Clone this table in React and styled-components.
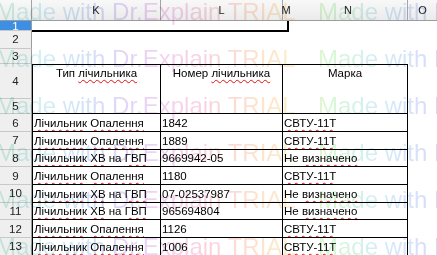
import React from 'react';
import styled, { createGlobalStyle } from 'styled-components';

const Global = createGlobalStyle`
  html, body { margin: 0; padding: 0; background: #fff; overflow: hidden; }
  body { font-family: "Liberation Sans", Arial, sans-serif; }
`;

const COLS = '32px 129px 122px 6px 119px 1fr';

const Sheet = styled.div`
  position: relative;
  width: 437px;
  height: 255px;
  overflow: hidden;
  background: #fff;
`;

const HeadRow = styled.div`
  display: grid;
  grid-template-columns: ${COLS};
  height: 21px;
  box-sizing: border-box;
  background: linear-gradient(#f8f8f8, #ebebeb);
  border-bottom: 1px solid #9c9c9c;
`;

const ColHead = styled.div`
  display: flex;
  align-items: center;
  justify-content: center;
  font-size: 11px;
  color: #1e1e1e;
  border-right: ${(p) => (p.$noLine ? 'none' : '1px solid #a4a4a4')};
  box-sizing: border-box;
  white-space: nowrap;
`;

const Body = styled.div`
  display: grid;
  grid-template-columns: ${COLS};
  grid-template-rows: 10px 17.5px 15.8px 34.4px 15.6px repeat(8, 17.67px);
`;

const RowHead = styled.div`
  grid-column: 1;
  grid-row: ${(p) => p.$row};
  display: flex;
  align-items: center;
  justify-content: center;
  box-sizing: border-box;
  font-size: 11.5px;
  color: ${(p) => (p.$active ? '#fff' : '#222')};
  background: ${(p) => (p.$active ? '#3d8fe3' : '#efefef')};
  border-right: 1px solid #9c9c9c;
  border-bottom: 1px solid #c8c8c8;
  overflow: hidden;
`;

const Selection = styled.div`
  grid-column: 2 / 5;
  grid-row: 1;
  box-sizing: border-box;
  border-right: 2px solid #000;
  border-bottom: 2px solid #000;
  margin-bottom: -1px;
`;

const Cell = styled.div`
  grid-column: ${(p) => p.$col};
  grid-row: ${(p) => p.$row};
  box-sizing: border-box;
  display: flex;
  align-items: ${(p) => (p.$head ? 'flex-start' : 'center')};
  justify-content: ${(p) => (p.$head ? 'center' : 'flex-start')};
  padding: ${(p) => (p.$head ? '2px 0 0 0' : '1px 0 0 1px')};
  font-size: 11.5px;
  color: #000;
  white-space: nowrap;
  overflow: hidden;
  border-right: 1px solid #000;
  border-bottom: 1px solid #000;
  border-left: ${(p) => (p.$first ? '1px solid #000' : 'none')};
  border-top: ${(p) => (p.$head ? '1px solid #000' : 'none')};
`;

const Text = styled.span`
  white-space: pre;
`;

const Wavy = styled.span`
  text-decoration: underline wavy #e01010;
  text-decoration-thickness: 1px;
  text-underline-offset: 2px;
`;

const Watermark = styled.div`
  position: absolute;
  left: -4px;
  top: -12px;
  width: 441px;
  pointer-events: none;
  mix-blend-mode: multiply;
`;

const MarkLine = styled.div`
  display: flex;
  height: 47px;
  line-height: 47px;
  font-size: 24px;
  white-space: nowrap;
  color: transparent;
  background: linear-gradient(
    to right,
    #d0f2e2 0px,
    #d2f0f4 44px,
    #d4e0f8 94px,
    #e4d4f6 134px,
    #f4d2f0 174px,
    #f9d4de 214px,
    #fde0d0 254px,
    #fcecca 294px,
    #d6f8d4 334px,
    #d4ecf8 384px,
    #d8daf8 441px
  );
  -webkit-background-clip: text;
  background-clip: text;
`;

const MarkText = styled.span`
  flex: 0 0 322px;
`;

const rows = [
  ['Лічильник Опалення', '1842', 'СВТУ-11Т'],
  ['Лічильник Опалення', '1889', 'СВТУ-11Т'],
  ['Лічильник ХВ на ГВП', '9669942-05', 'Не визначено'],
  ['Лічильник Опалення', '1180', 'СВТУ-11Т'],
  ['Лічильник ХВ на ГВП', '07-02537987', 'Не визначено'],
  ['Лічильник ХВ на ГВП', '965694804', 'Не визначено'],
  ['Лічильник Опалення', '1126', 'СВТУ-11Т'],
  ['Лічильник Опалення', '1006', 'СВТУ-11Т'],
];

function typeText(t) {
  if (t === 'Лічильник Опалення') {
    return (
      <Text>
        <Wavy>Лічильник</Wavy>{' '}<Wavy>Опалення</Wavy>
      </Text>
    );
  }
  return (
    <Text>
      <Wavy>Лічильник</Wavy>{' '}<Wavy>ХВ</Wavy>{' на '}<Wavy>ГВП</Wavy>
    </Text>
  );
}

function brandText(t) {
  if (t === 'Не визначено') {
    return (
      <Text>
        {'Не '}<Wavy>визначено</Wavy>
      </Text>
    );
  }
  return (
    <Text>
      <Wavy>{t}</Wavy>
    </Text>
  );
}

export default function App() {
  const markLines = [0, 1, 2, 3, 4, 5];
  return (
    <Sheet>
      <Global />
      <HeadRow>
        <ColHead />
        <ColHead>K</ColHead>
        <ColHead>L</ColHead>
        <ColHead $noLine>M</ColHead>
        <ColHead>N</ColHead>
        <ColHead $noLine>O</ColHead>
      </HeadRow>
      <Body>
        <RowHead $row={1} $active>1</RowHead>
        <Selection />
        {[2, 3, 4, 5].map((r) => (
          <RowHead key={r} $row={r}>{r}</RowHead>
        ))}
        <Cell $col="2" $row="4 / 6" $head $first>
          <Text>
            {'Тип '}<Wavy>лічильника</Wavy>
          </Text>
        </Cell>
        <Cell $col="3" $row="4 / 6" $head>
          <Text>
            {'Номер '}<Wavy>лічильника</Wavy>
          </Text>
        </Cell>
        <Cell $col="4 / 6" $row="4 / 6" $head>
          <Text>Марка</Text>
        </Cell>
        {rows.map((r, i) => {
          const row = i + 6;
          return (
            <React.Fragment key={row}>
              <RowHead $row={row}>{row}</RowHead>
              <Cell $col="2" $row={row} $first>{typeText(r[0])}</Cell>
              <Cell $col="3" $row={row}><Text>{r[1]}</Text></Cell>
              <Cell $col="4 / 6" $row={row}>{brandText(r[2])}</Cell>
            </React.Fragment>
          );
        })}
      </Body>
      <Watermark>
        {markLines.map((l) => (
          <MarkLine key={l}>
            <MarkText>Made with Dr.Explain TRIAL</MarkText>
            <MarkText>Made with Dr.Explain TRIAL</MarkText>
          </MarkLine>
        ))}
      </Watermark>
    </Sheet>
  );
}
